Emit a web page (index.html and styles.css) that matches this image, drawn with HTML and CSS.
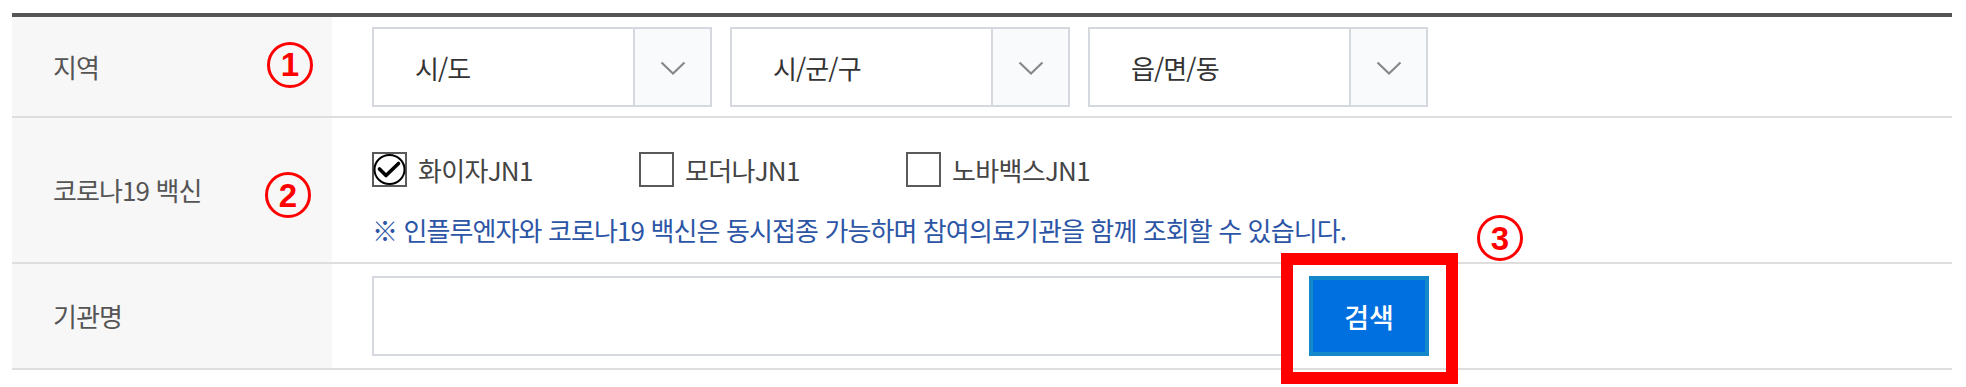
FILE: index.html
```html
<!DOCTYPE html>
<html lang="ko">
<head>
<meta charset="utf-8">
<title>검색</title>
<link rel="stylesheet" href="styles.css">
</head>
<body>
<div class="wrap">
  <div class="table">
    <div class="row row-region">
      <div class="th"><span class="th-text">지역</span><span class="mark">1</span></div>
      <div class="td">
        <div class="selects">
          <div class="select"><span class="sel-text">시/도</span><span class="sel-arrow"><svg width="26" height="15" viewBox="0 0 26 15"><path d="M1.5 1.5 L13 12.5 L24.5 1.5" fill="none" stroke="#888" stroke-width="2.2"/></svg></span></div>
          <div class="select"><span class="sel-text">시/군/구</span><span class="sel-arrow"><svg width="26" height="15" viewBox="0 0 26 15"><path d="M1.5 1.5 L13 12.5 L24.5 1.5" fill="none" stroke="#888" stroke-width="2.2"/></svg></span></div>
          <div class="select"><span class="sel-text">읍/면/동</span><span class="sel-arrow"><svg width="26" height="15" viewBox="0 0 26 15"><path d="M1.5 1.5 L13 12.5 L24.5 1.5" fill="none" stroke="#888" stroke-width="2.2"/></svg></span></div>
        </div>
      </div>
    </div>
    <div class="row row-vaccine">
      <div class="th"><span class="th-text">코로나19 백신</span><span class="mark mark-2">2</span></div>
      <div class="td">
        <div class="checks">
          <label class="check"><span class="box"><svg width="35" height="35" viewBox="0 0 35 35"><rect x="1" y="1" width="33" height="33" fill="#fff" stroke="#5a5a5a" stroke-width="2"/><ellipse cx="17.5" cy="17.5" rx="15" ry="14.5" fill="#fff" stroke="#000" stroke-width="2"/><path d="M7.5 17 L14 23.5 L26.5 11.5" fill="none" stroke="#000" stroke-width="3.6" stroke-linejoin="round" stroke-linecap="round"/></svg></span><span class="check-text">화이자JN1</span></label>
          <label class="check"><span class="box"><svg width="35" height="35" viewBox="0 0 35 35"><rect x="1" y="1" width="33" height="33" fill="#fff" stroke="#5a5a5a" stroke-width="2"/></svg></span><span class="check-text">모더나JN1</span></label>
          <label class="check"><span class="box"><svg width="35" height="35" viewBox="0 0 35 35"><rect x="1" y="1" width="33" height="33" fill="#fff" stroke="#5a5a5a" stroke-width="2"/></svg></span><span class="check-text">노바백스JN1</span></label>
        </div>
        <p class="notice">※ 인플루엔자와 코로나19 백신은 동시접종 가능하며 참여의료기관을 함께 조회할 수 있습니다.</p>
      </div>
      <span class="mark mark-3">3</span>
    </div>
    <div class="row row-name">
      <div class="th"><span class="th-text">기관명</span></div>
      <div class="td">
        <div class="search">
          <div class="input"></div>
          <div class="btn-wrap">
            <button class="btn" type="button">검색</button>
            <span class="highlight"></span>
          </div>
        </div>
      </div>
    </div>
  </div>
</div>
</body>
</html>
```

FILE: styles.css
```css
* { box-sizing: border-box; }

html, body {
  margin: 0;
  padding: 0;
  background: #fff;
}

body {
  font-family: "Noto Sans CJK KR", "Noto Sans", sans-serif;
  color: #444;
}

.wrap {
  padding: 13px 14px 17px 12px;
  min-height: 387px;
}

.table {
  border-top: 4px solid #555;
  position: relative;
}

.row {
  display: grid;
  grid-template-columns: 320px 1fr;
  border-bottom: 2px solid #dedede;
  position: relative;
}

.th {
  background: #f7f7f7;
  display: flex;
  align-items: center;
  padding-left: 41px;
  padding-right: 19px;
}

.th-text {
  flex: 1;
  font-size: 26px;
  letter-spacing: -0.9px;
  color: #555;
  line-height: 1;
}

.mark {
  width: 46px;
  height: 46px;
  border: 3px solid #ff0000;
  border-radius: 50%;
  display: flex;
  align-items: center;
  justify-content: center;
  color: #ff0000;
  font-family: "Liberation Sans", Arial, sans-serif;
  font-weight: bold;
  font-size: 33px;
  line-height: 1;
  margin-top: -4px;
}

.mark-2 {
  margin-top: 10px;
  margin-right: 2px;
}

.mark-3 {
  position: absolute;
  left: 1465px;
  top: 97px;
  margin: 0;
}

.td {
  padding-left: 40px;
}

/* row 1 */
.row-region .td {
  padding-top: 10px;
  padding-bottom: 9px;
}

.selects {
  display: flex;
  gap: 18px;
}

.select {
  width: 340px;
  height: 80px;
  border: 2px solid #d5d8de;
  display: flex;
  background: #fff;
}

.sel-text {
  flex: 1;
  display: flex;
  align-items: center;
  padding-left: 41px;
  font-size: 26px;
  color: #333;
  letter-spacing: -0.9px;
}

.sel-arrow {
  width: 77px;
  border-left: 2px solid #d5d8de;
  background: #f9fafc;
  display: flex;
  align-items: center;
  justify-content: center;
  padding-top: 3px;
}

/* row 2 */
.row-vaccine .td {
  padding-top: 34px;
  padding-bottom: 15px;
}

.checks {
  display: flex;
  height: 35px;
}

.check {
  width: 267px;
  display: flex;
  align-items: center;
  gap: 11px;
}

.box {
  width: 35px;
  height: 35px;
  display: block;
}

.box svg {
  display: block;
}

.check-text {
  font-size: 26px;
  color: #444;
  letter-spacing: -0.7px;
  line-height: 1;
}

.notice {
  margin: 26px 0 0;
  font-size: 26px;
  line-height: 34px;
  height: 34px;
  letter-spacing: -0.9px;
  color: #2c55a6;
  white-space: nowrap;
}

/* row 3 */
.row-name .td {
  padding-top: 12px;
  padding-bottom: 12px;
}

.search {
  display: flex;
  gap: 19px;
}

.input {
  width: 918px;
  height: 80px;
  border: 2px solid #d5d8de;
  background: #fff;
}

.btn-wrap {
  position: relative;
}

.btn {
  width: 120px;
  height: 80px;
  background: #006fe0;
  border: 4px solid #1488c8;
  color: #fff;
  font-family: "Noto Sans CJK KR", sans-serif;
  font-size: 27px;
  font-weight: 500;
  padding: 0;
  display: block;
}

.highlight {
  position: absolute;
  left: -28px;
  top: -23px;
  right: -29px;
  bottom: -28px;
  border: 12px solid #ff0000;
  pointer-events: none;
}
```
